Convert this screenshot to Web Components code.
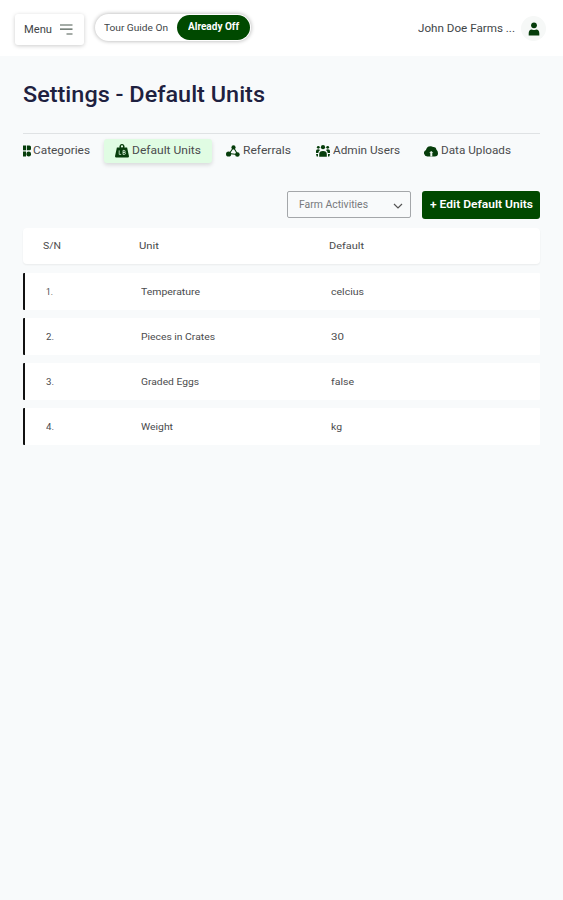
<!DOCTYPE html>
<html lang="en">
<head>
<meta charset="utf-8">
<title>Settings - Default Units</title>
<style>
body{margin:0;background:#f8fafb;color:#4a4b4d;font-family:Roboto,"Liberation Sans",sans-serif}
</style>
</head>
<body>
<settings-page></settings-page>
<script>
const define = (name, html, setup) => customElements.define(name, class extends HTMLElement {
  constructor() { super(); this.attachShadow({mode: 'open'}).innerHTML = html; }
  connectedCallback() { if (setup) setup(this, this.shadowRoot); }
});

// A single-line label stretched horizontally to fill its width.
define('fit-label', `<style>:host{display:block;white-space:nowrap;flex:none;line-height:1.2}span{display:inline-block;transform-origin:0 50%}</style><span><slot></slot></span>`, (el, root) => {
  const w = parseFloat(el.getAttribute('width'));
  const span = root.querySelector('span');
  el.style.width = w + 'px';
  span.style.transform = `scaleX(${(w / span.getBoundingClientRect().width).toFixed(4)})`;
});

const ICONS = {
  grid: ['0 0 8 12', '<rect width="3" height="4.8" y=".5"/><path d="M3.8.5h2.6q1.6 0 1.6 1.6v1.6q0 1.6-1.6 1.6H3.8z"/><rect y="6.5" width="3" height="5"/><rect x="3.4" y="6.5" width="4.6" height="5" rx="2.3"/>'],
  weight: ['0 0 14 14', '<path fill-rule="evenodd" d="M4.6 3.6a2.6 2.6 0 1 1 4.8 0h2.7L14 12.2q0 1.2-1.2 1.2H1.2Q0 13.4 0 12.2L1.9 3.6zM7 1.3a1.1 1.1 0 1 0 0 2.2 1.1 1.1 0 0 0 0-2.2z"/><path d="M4.2 6.4v4h2M8 6.4v4h1.2q1.3 0 1.3-1.1t-1.3-.9H8h1.2q1 0 1-1t-1-1z" fill="none" stroke="#d9f5dc" stroke-width=".8"/>'],
  nodes: ['0 0 14 12', '<path d="M7.5 2.5 3 9M7.5 2.5 11.5 9M3 8.5l8 1" stroke="#063d0b" stroke-width="1.1"/><circle cx="7.5" cy="2.4" r="2.1"/><circle cx="2.6" cy="9" r="2.6"/><circle cx="11.4" cy="9.5" r="2.3"/>'],
  users: ['0 0 14 12', '<circle cx="7" cy="2.2" r="2.1"/><circle cx="2.3" cy="2.3" r="1.4"/><circle cx="11.7" cy="2.3" r="1.4"/><path d="M3.2 11.8V9.2q0-3.1 3.8-3.1t3.8 3.1v2.6zM0 8V6q0-1.7 2-1.7 1.4 0 2 .7Q2.3 6.4 2.3 8zm14 0V6q0-1.7-2-1.7-1.4 0-2 .7 1.7 1.4 1.7 3zM0 9h2v2.4H.7zm14 0h-2v2.4h1.3z"/>'],
  cloud: ['0 0 14 11', '<path d="M3.5 10.5A3.4 3.4 0 0 1 2 4 4.4 4.4 0 0 1 9 1.1q3.2-.5 3.5 2.6Q14 4.8 14 7.2q0 3.3-3.5 3.3z"/><path d="M7.2 5 5.2 6.8h1.1v3.7h2V6.8h1z" fill="#e8f2e9"/>'],
  person: ['0 0 12 14', '<circle cx="6" cy="3.3" r="2.9"/><path d="M.7 13.5v-2.3q0-3.6 3.2-3.8 2.1 1.3 4.2 0 3.2.2 3.2 3.8v2.3z"/>'],
  menu: ['0 0 13 11', '<path d="M0 1h12.5M0 5.2h12.5M6.5 10h6" stroke="#4c5a50" stroke-width="1.2"/>'],
  chevron: ['0 0 10 6', '<path d="m1 1 4 4 4-4" fill="none" stroke="#555" stroke-width="1.2"/>']
};
define('ui-icon', `<style>:host{display:block;flex:none}svg{display:block;width:100%;height:100%;fill:#063d0b}</style><svg></svg>`, (el, root) => {
  const [box, shapes] = ICONS[el.getAttribute('name')];
  const [, , w, h] = box.split(' ');
  el.style.width = w + 'px'; el.style.height = h + 'px';
  const svg = root.querySelector('svg');
  svg.setAttribute('viewBox', box); svg.innerHTML = shapes;
});

define('app-header', `<style>
:host{display:flex;box-sizing:border-box;height:56px;background:#fff;align-items:flex-start;padding:0 17px 0 15px;color:#414547}
.menu{box-sizing:border-box;width:69px;height:31px;margin-top:14px;padding:0 0 0 9px;display:flex;gap:8px;align-items:center;border-radius:3px;box-shadow:0 1px 4px #0003;font-size:11px}
.tour{box-sizing:border-box;display:flex;align-items:center;width:156px;height:27px;margin:14px 0 0 11px;border-radius:14px;box-shadow:0 0 4px #0005;padding:0 1px 0 9px;font-size:9.6px;justify-content:space-between}
.off{box-sizing:border-box;width:73px;height:25px;border-radius:13px;background:#004900;color:#fff;display:flex;align-items:center;justify-content:center;font-weight:700;font-size:10.3px}
.user{margin:16px 0 0 auto;display:flex;align-items:center;gap:6px;font-size:11px}
.avatar{width:25px;height:25px;border-radius:50%;background:#f6f8f7;display:flex;align-items:center;justify-content:center}
</style>
<div class="menu"><fit-label width="28">Menu</fit-label><ui-icon name="menu"></ui-icon></div>
<div class="tour"><fit-label width="64">Tour Guide On</fit-label><div class="off"><fit-label width="51">Already Off</fit-label></div></div>
<div class="user"><fit-label width="97">John Doe Farms ...</fit-label><div class="avatar"><ui-icon name="person"></ui-icon></div></div>`);

define('tab-item', `<style>
:host{box-sizing:border-box;display:flex;align-items:center;gap:3px;height:24px;font-size:11px;border-radius:3px;flex:none}
:host([active]){background:#e0fce3;padding:0 11px;width:108px;box-shadow:0 2px 4px #0002}
</style><slot></slot>`);

define('tab-bar', `<style>:host{display:flex;border-top:1px solid #dfe2e4;padding-top:5px;height:25px}
tab-item:nth-of-type(1){gap:2px}
tab-item:nth-of-type(n+2){margin-left:14px}
tab-item:nth-of-type(n+4){margin-left:24.5px}</style>
<tab-item><ui-icon name="grid"></ui-icon><fit-label width="57">Categories</fit-label></tab-item>
<tab-item active><ui-icon name="weight"></ui-icon><fit-label width="69">Default Units</fit-label></tab-item>
<tab-item><ui-icon name="nodes"></ui-icon><fit-label width="48">Referrals</fit-label></tab-item>
<tab-item><ui-icon name="users"></ui-icon><fit-label width="67">Admin Users</fit-label></tab-item>
<tab-item><ui-icon name="cloud"></ui-icon><fit-label width="70">Data Uploads</fit-label></tab-item>`);

define('action-bar', `<style>
:host{display:flex;justify-content:flex-end;gap:11px;margin-top:27px}
.select{box-sizing:border-box;width:124px;height:27px;border:1px solid #a4a7aa;border-radius:2px;display:flex;align-items:center;justify-content:space-between;padding:0 7px 0 11px;font-size:10px;color:#77797c}
ui-icon{margin-top:3px}
.edit{width:118px;height:28px;border-radius:3px;background:#004900;color:#fff;display:flex;align-items:center;justify-content:center;font-size:11.3px;font-weight:600}
</style>
<div class="select"><fit-label width="69">Farm Activities</fit-label><ui-icon name="chevron"></ui-icon></div>
<div class="edit"><fit-label width="103">+ Edit Default Units</fit-label></div>`);

define('table-row', `<style>
:host{box-sizing:border-box;display:grid;grid-template-columns:95px 190px 1fr;align-items:center;height:37px;background:#fff;border-left:2px solid #111;padding-left:21px;font-size:9.6px;border-radius:1px}
:host([head]){height:36px;grid-template-columns:96px 190px 1fr;border-left:0;padding-left:20px;border-radius:4px;box-shadow:0 1px 2px #00000010;margin-bottom:1px}
</style><slot></slot>`);

const rows = [['1.',7,'Temperature',59,'celcius',33],['2.',8,'Pieces in Crates',74,'30',13],['3.',8,'Graded Eggs',58,'false',23],['4.',8,'Weight',32,'kg',11]];
define('units-table', `<style>:host{display:flex;flex-direction:column;gap:8px;margin-top:9px}</style>
<table-row head><fit-label width="18">S/N</fit-label><fit-label width="20">Unit</fit-label><fit-label width="35">Default</fit-label></table-row>
${rows.map(r => `<table-row>${[0,2,4].map(i => `<fit-label width="${r[i+1]}">${r[i]}</fit-label>`).join('')}</table-row>`).join('')}`);

define('settings-page', `<style>
:host{display:block;min-height:900px;background:#f8fafb}
main{padding:26px 23px 0}
h1{margin:0 0 24px;height:27px;line-height:27px;font-size:21.5px;font-weight:500;color:#1e2140}
</style>
<app-header></app-header>
<main><h1><fit-label width="242">Settings - Default Units</fit-label></h1>
<tab-bar></tab-bar><action-bar></action-bar><units-table></units-table></main>`);
</script>
</body>
</html>
